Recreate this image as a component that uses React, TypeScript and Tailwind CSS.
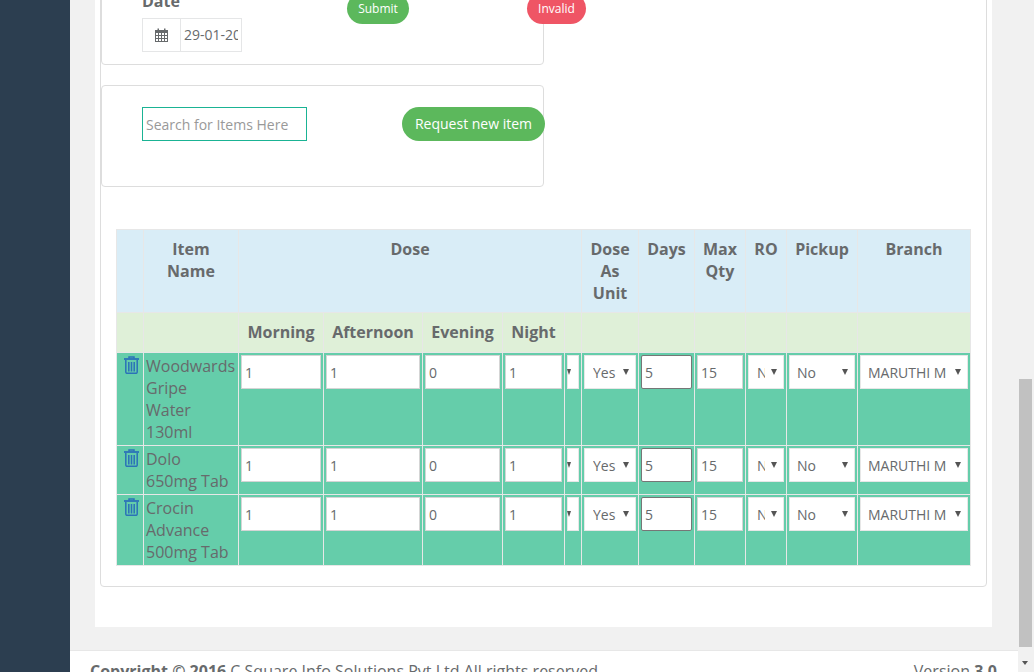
import React from 'react';

const cols = [27, 95, 85, 99, 80, 62, 17, 57, 56, 51, 41, 71, 113];

const rows = [
  { name: ['Woodwards', 'Gripe', 'Water', '130ml'], height: 'h-[93px]' },
  { name: ['Dolo', '650mg Tab'], height: 'h-[49px]' },
  { name: ['Crocin', 'Advance', '500mg Tab'], height: 'h-[71px]' },
];

const TrashIcon = () => (
  <svg width="15" height="18" viewBox="0 0 15 18" fill="none" stroke="#2b72b8" strokeWidth="1.5" className="ml-[7px] mt-[3px]">
    <path d="M5 2.5 V1 H10 V2.5" />
    <path d="M0 3 H15" strokeWidth="1.8" />
    <path d="M1.8 4 V16 Q1.8 17.3 3 17.3 H12 Q13.2 17.3 13.2 16 V4" />
    <path d="M4.8 6 V15.5 M7.5 6 V15.5 M10.2 6 V15.5" />
  </svg>
);

const CalendarIcon = () => (
  <svg width="13" height="14" viewBox="0 0 13 14" fill="#676a6c">
    <path d="M0 2 H2.5 V0.5 H4 V2 H9 V0.5 H10.5 V2 H13 V14 H0 Z M1 5 V7 H3 V5 Z M4 5 V7 H6 V5 Z M7 5 V7 H9 V5 Z M10 5 V7 H12 V5 Z M1 8 V10 H3 V8 Z M4 8 V10 H6 V8 Z M7 8 V10 H9 V8 Z M10 8 V10 H12 V8 Z M1 11 V13 H3 V11 Z M4 11 V13 H6 V11 Z M7 11 V13 H9 V11 Z M10 11 V13 H12 V11 Z" fillRule="evenodd" />
  </svg>
);

const TextCell = ({ value, dark }: { value: string; dark?: boolean }) => (
  <td className="border border-[#e7e7e7] align-top px-[2px] pt-[2px] pb-0">
    <input
      readOnly
      value={value}
      className={`block w-full h-[34px] bg-white pl-[3px] pt-[1px] text-[14px] text-[#676a6c] outline-none border ${
        dark ? 'border-[#767676] rounded-[2px]' : 'border-[#d5d5d5]'
      }`}
    />
  </td>
);

const SelectCell = ({ value, pad, arrowLeft }: { value: string; pad: string; arrowLeft?: boolean }) => (
  <td className="border border-[#e7e7e7] align-top px-[2px] pt-[2px] pb-0">
    <div className="relative h-[34px]">
      <select
        value={value}
        onChange={() => {}}
        className={`block w-full h-[34px] appearance-none bg-white text-[14px] text-[#676a6c] outline-none border border-[#e7e7e7] ${pad}`}
      >
        <option value={value}>{value}</option>
      </select>
      <span
        className={`absolute top-[14px] w-0 h-0 border-t-[6px] border-t-[#555] border-x-transparent ${
          arrowLeft ? 'left-0 border-x-[2.5px]' : 'right-[7px] border-x-[3.5px]'
        }`}
      />
    </div>
  </td>
);

export default function App() {
  return (
    <div className="flex h-[672px] w-[1034px] overflow-hidden bg-[#f1f1f1] font-['Open_Sans',sans-serif] text-[16px] leading-[22px] text-[#676a6c]">
      <div className="w-[70px] shrink-0 bg-[#2c3e50]" />

      <div className="flex w-[948px] flex-col overflow-hidden">
        <div className="ml-[25px] mt-[-47px] h-[674px] w-[897px] shrink-0 bg-white px-[5px]">
          <div className="h-[634px] w-[887px] rounded-[4px] border border-[#ddd]">
            {/* date card */}
            <div className="mt-[5px] flex h-[106px] w-[443px] rounded-[4px] border border-[#ddd] pl-[40px]">
              <div className="w-[100px] shrink-0 pt-[30px]">
                <div className="mb-[6px] font-bold">Date</div>
                <div className="flex h-[34px] w-[100px] border border-[#e5e6e7]">
                  <div className="flex w-[38px] shrink-0 items-center justify-center border-r border-[#e5e6e7]">
                    <CalendarIcon />
                  </div>
                  <input
                    readOnly
                    value="29-01-2017"
                    className="w-[57px] bg-white pl-[3px] text-[14px] text-[#676a6c] outline-none"
                  />
                </div>
              </div>
              <button className="ml-[105px] mt-[33px] h-[31px] w-[62px] shrink-0 rounded-[16px] bg-[#5cb85c] text-[12px] text-white">
                Submit
              </button>
              <button className="ml-[118px] mt-[33px] h-[31px] w-[59px] shrink-0 rounded-[16px] bg-[#ef5565] text-[12px] text-white">
                Invalid
              </button>
            </div>

            {/* search card */}
            <div className="mt-[20px] flex h-[102px] w-[443px] items-start rounded-[4px] border border-[#ddd] pl-[40px] pt-[21px]">
              <input
                placeholder="Search for Items Here"
                className="h-[34px] w-[165px] border border-[#1ab394] pl-[3px] text-[14px] text-[#676a6c] outline-none placeholder:text-[#999]"
              />
              <button className="ml-[95px] h-[34px] w-[143px] shrink-0 rounded-[17px] bg-[#5cb85c] text-[14px] text-white">
                Request new item
              </button>
            </div>

            {/* items table */}
            <table className="ml-[15px] mt-[42px] w-[854px] table-fixed border-collapse">
              <colgroup>
                {cols.map((w, i) => (
                  <col key={i} style={{ width: w }} />
                ))}
              </colgroup>
              <thead className="font-bold">
                <tr className="h-[83px] bg-[#d9edf7] text-center align-top">
                  <th className="border border-[#e7e7e7]" />
                  <th className="border border-[#e7e7e7] pt-[8px]">Item<br />Name</th>
                  <th colSpan={5} className="border border-[#e7e7e7] pt-[8px]">Dose</th>
                  <th className="border border-[#e7e7e7] pt-[8px]">Dose<br />As<br />Unit</th>
                  <th className="border border-[#e7e7e7] pt-[8px]">Days</th>
                  <th className="border border-[#e7e7e7] pt-[8px]">Max<br />Qty</th>
                  <th className="border border-[#e7e7e7] pt-[8px]">RO</th>
                  <th className="border border-[#e7e7e7] pt-[8px]">Pickup</th>
                  <th className="border border-[#e7e7e7] pt-[8px]">Branch</th>
                </tr>
                <tr className="h-[40px] bg-[#dff0d8] text-center">
                  <th className="border border-[#e7e7e7]" />
                  <th className="border border-[#e7e7e7]" />
                  <th className="border border-[#e7e7e7] pb-[2px]">Morning</th>
                  <th className="border border-[#e7e7e7] pb-[2px]">Afternoon</th>
                  <th className="border border-[#e7e7e7] pb-[2px]">Evening</th>
                  <th className="border border-[#e7e7e7] pb-[2px]">Night</th>
                  <th className="border border-[#e7e7e7]" />
                  <th className="border border-[#e7e7e7]" />
                  <th className="border border-[#e7e7e7]" />
                  <th className="border border-[#e7e7e7]" />
                  <th className="border border-[#e7e7e7]" />
                  <th className="border border-[#e7e7e7]" />
                  <th className="border border-[#e7e7e7]" />
                </tr>
              </thead>
              <tbody className="bg-[#65cdaa]">
                {rows.map((row, i) => (
                  <tr key={i} className={row.height}>
                    <td className="border border-[#e7e7e7] align-top p-0">
                      <TrashIcon />
                    </td>
                    <td className="border border-[#e7e7e7] align-top px-[2px] pt-[2px] pb-0">
                      {row.name.map((line) => (
                        <div key={line}>{line}</div>
                      ))}
                    </td>
                    <TextCell value="1" />
                    <TextCell value="1" />
                    <TextCell value="0" />
                    <TextCell value="1" />
                    <SelectCell value="" pad="p-0" arrowLeft />
                    <SelectCell value="Yes" pad="pl-[8px] pr-[14px] pt-[2px]" />
                    <TextCell value="5" dark />
                    <TextCell value="15" />
                    <SelectCell value="No" pad="pl-[8px] pr-[18px] pt-[2px]" />
                    <SelectCell value="No" pad="pl-[7px] pr-[14px] pt-[2px]" />
                    <SelectCell value="MARUTHI MEDICALS" pad="pl-[7px] pr-[20px] pt-[2px]" />
                  </tr>
                ))}
              </tbody>
            </table>
          </div>
        </div>

        <div className="mt-[23px] flex h-[60px] shrink-0 justify-between border-t border-[#e7e7e7] bg-white pl-[20px] pr-[21px] pt-[9px]">
          <div>
            <b>Copyright © 2016</b> C Square Info Solutions Pvt Ltd All rights reserved.
          </div>
          <div>
            Version <b>3.0</b>
          </div>
        </div>
      </div>

      <div className="relative w-[16px] shrink-0">
        <div className="ml-[1px] mt-[379px] h-[268px] w-[13px] bg-[#c1c1c1]" />
        <span className="absolute left-[4px] top-[661px] h-0 w-0 border-x-[3.5px] border-t-[4px] border-x-transparent border-t-[#555]" />
      </div>
    </div>
  );
}
